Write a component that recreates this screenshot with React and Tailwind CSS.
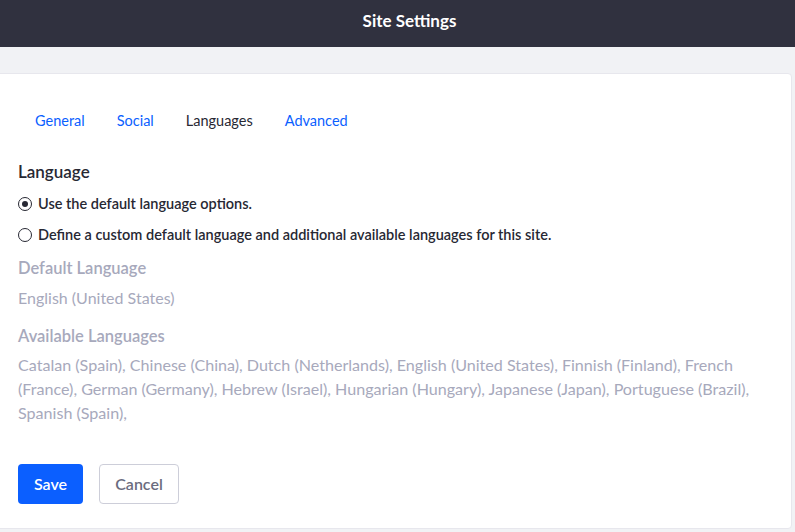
export default function App() {
  const font = { fontFamily: '"Segoe UI", "Lato", "Noto Sans", sans-serif' };
  return (
    <div className="w-[795px] h-[532px] bg-[#f1f2f5] overflow-hidden" style={font}>
      <div className="h-[47px] bg-[#30313f] flex items-center justify-center pl-[24px] pb-[6px]">
        <span className="text-white text-[17px] font-bold">Site Settings</span>
      </div>
      <div className="pt-[26px] pr-[3px]">
        <div className="bg-white border border-[#e7e7ed] rounded-r-[4px] -ml-[2px] h-[456px] pl-[19px]">
          <div className="flex gap-[32px] pl-[17px] pt-[36px] text-[14.5px]">
            <span className="text-[#0b5fff]">General</span>
            <span className="text-[#0b5fff]">Social</span>
            <span className="text-[#272833]">Languages</span>
            <span className="text-[#0b5fff]">Advanced</span>
          </div>
          <div className="mt-[28px] text-[17px] font-semibold text-[#272833] leading-[24px]">Language</div>
          <div className="mt-[10px] flex items-center gap-[6px] h-[20px]">
            <span className="w-[14px] h-[14px] rounded-full border border-[#272833] flex items-center justify-center">
              <span className="w-[6px] h-[6px] rounded-full bg-[#272833]" />
            </span>
            <span className="text-[14.5px] font-semibold text-[#272833]">Use the default language options.</span>
          </div>
          <div className="mt-[11px] flex items-center gap-[6px] h-[20px]">
            <span className="w-[14px] h-[14px] rounded-full border border-[#272833]" />
            <span className="text-[14.5px] font-semibold text-[#272833]">Define a custom default language and additional available languages for this site.</span>
          </div>
          <div className="mt-[11px] text-[16.5px] font-semibold text-[#a7a9bc] leading-[24px]">Default Language</div>
          <div className="mt-[6px] text-[16px] text-[#a7a9bc] leading-[24px]">English (United States)</div>
          <div className="mt-[14px] text-[16.5px] font-semibold text-[#a7a9bc] leading-[24px]">Available Languages</div>
          <div className="mt-[5px] text-[16.1px] text-[#a7a9bc] leading-[24px] pr-[30px]">
            Catalan (Spain), Chinese (China), Dutch (Netherlands), English (United States), Finnish (Finland), French (France), German (Germany), Hebrew (Israel), Hungarian (Hungary), Japanese (Japan), Portuguese (Brazil), Spanish (Spain),
          </div>
          <div className="mt-[39px] flex gap-[16px]">
            <button className="h-[40px] w-[65px] rounded-[4px] bg-[#0b5fff] text-white text-[16px] font-semibold">Save</button>
            <button className="h-[40px] w-[80px] rounded-[4px] bg-white border border-[#cdced9] text-[#6b6c7e] text-[16px] font-semibold">Cancel</button>
          </div>
        </div>
      </div>
    </div>
  );
}
